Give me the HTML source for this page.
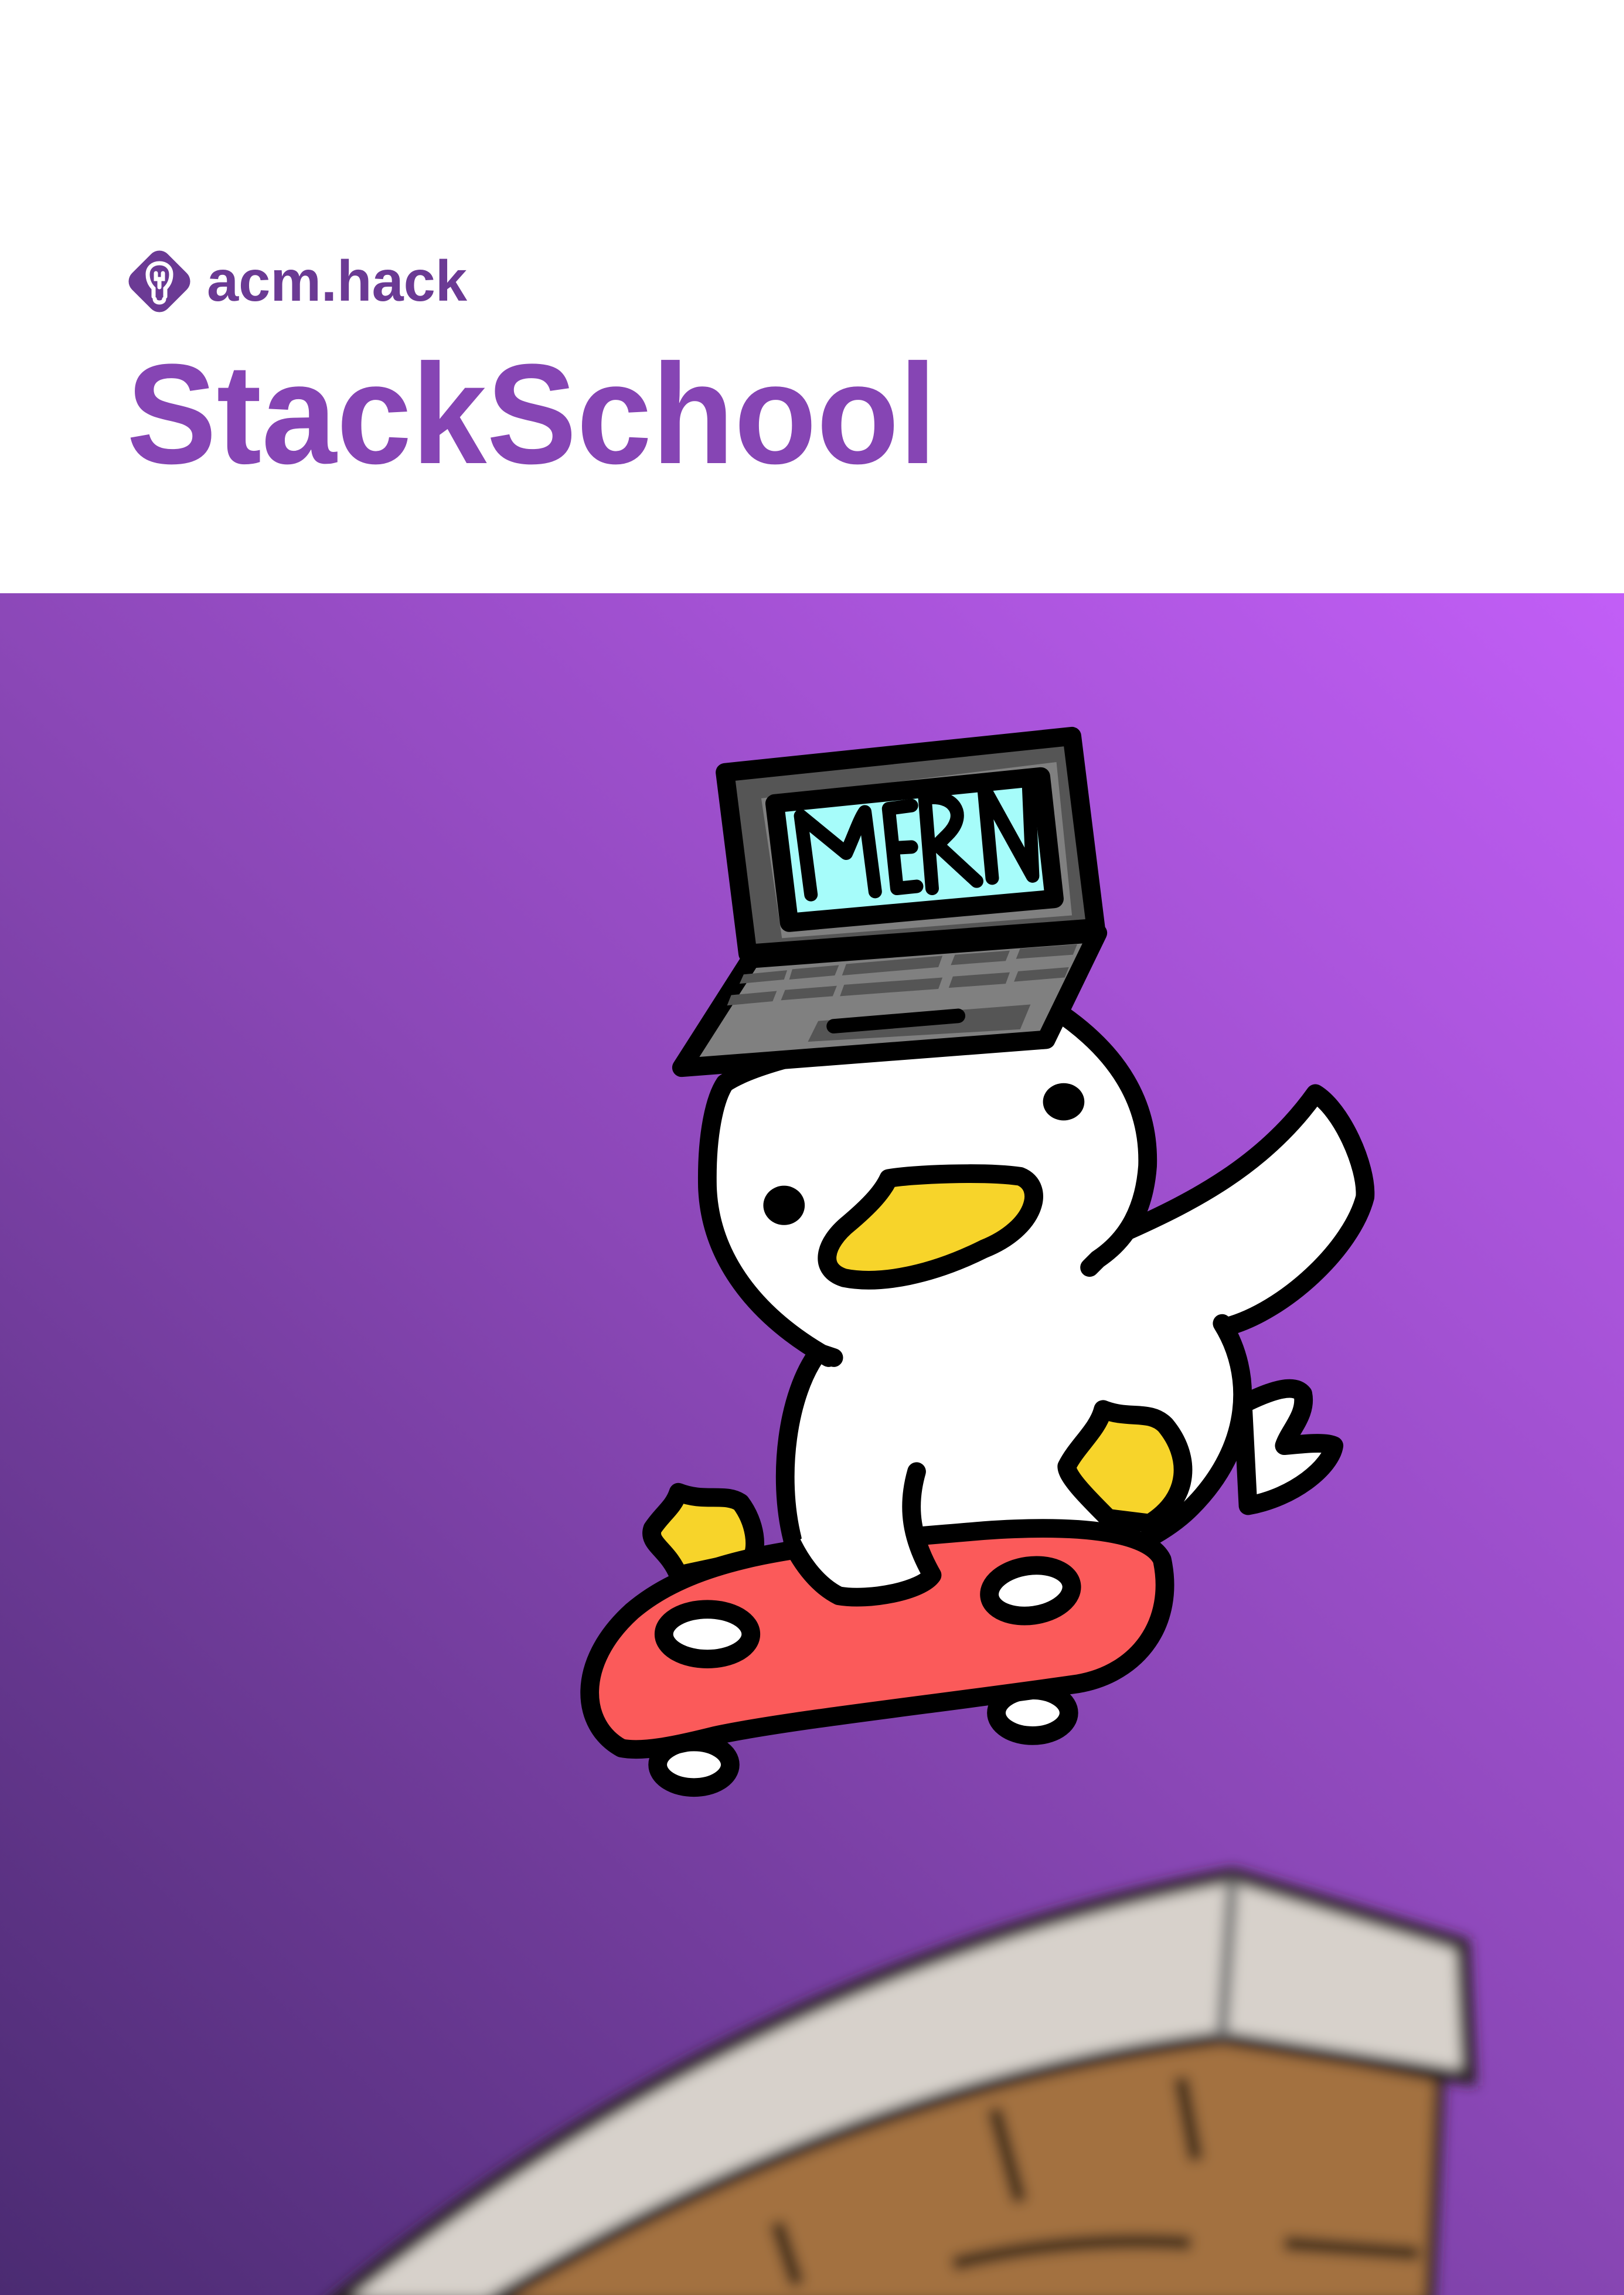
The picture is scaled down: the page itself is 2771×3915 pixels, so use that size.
<!DOCTYPE html>
<html><head><meta charset="utf-8"><style>
html,body{margin:0;padding:0;background:#fff;}
body{width:2771px;height:3915px;position:relative;overflow:hidden;}
svg{position:absolute;left:0;}
</style></head><body>
<svg style="top:0" width="2771" height="1012" viewBox="0 0 2771 1012">
  <rect x="229" y="437" width="86" height="86" rx="20" fill="#6b3a94" transform="rotate(45 272 480)"/>
  <g fill="none" stroke="#fff" stroke-width="7" stroke-linecap="round">
    <path d="M262,506 L262,492 C256,486 252,478 252,468 C252,456 261,449 272,449 C283,449 292,456 292,468 C292,478 288,486 282,492 L282,506"/>
    <path d="M264,510 C264,518 280,518 280,510"/>
    <path d="M266,466 L266,476 L278,476 L278,466 M272,476 L272,490"/>
  </g>
  <text x="353" y="513" textLength="444" lengthAdjust="spacingAndGlyphs" font-family="Liberation Sans, sans-serif" font-weight="700" font-size="98" fill="#6b3a94">acm.hack</text>
  <text x="216" y="790" textLength="1382" lengthAdjust="spacingAndGlyphs" font-family="Liberation Sans, sans-serif" font-weight="700" font-size="243" fill="#8645b4">StackSchool</text>
</svg>
<svg style="top:1012px" width="2771" height="2903" viewBox="0 7 1568 1643" preserveAspectRatio="none">
  <defs>
    <linearGradient id="bg" x1="1568" y1="0" x2="0" y2="1649" gradientUnits="userSpaceOnUse">
      <stop offset="0" stop-color="#c25ef7"/>
      <stop offset="0.5" stop-color="#8a47b6"/>
      <stop offset="1" stop-color="#4b2b72"/>
    </linearGradient>
    <filter id="bl" x="-10%" y="-10%" width="120%" height="120%"><feGaussianBlur stdDeviation="6"/></filter>
  </defs>
  <rect x="0" y="0" width="1568" height="1660" fill="url(#bg)"/>
  <g filter="url(#bl)">
    <path d="M460,1660 C700,1520 950,1430 1180,1400 L1390,1440 L1380,1660Z" fill="#a3713f" stroke="#2a2420" stroke-width="10"/>
    <path d="M320,1660 C600,1430 900,1300 1190,1245 L1412,1312 L1418,1440 L1180,1402 C950,1430 700,1520 470,1660Z" fill="#d7d1cb" stroke="#2a2420" stroke-width="14"/>
    <path d="M1190,1250 L1180,1400" stroke="#777" stroke-width="12"/>
    <path d="M750,1580 L770,1640 M960,1470 L985,1560 M1140,1440 L1155,1520 M920,1620 C1000,1600 1080,1595 1150,1600 M1240,1600 L1370,1610" stroke="#3b2a1a" stroke-width="14" fill="none"/>
  </g>
  <g stroke="#000" stroke-width="18" stroke-linejoin="round" stroke-linecap="round">
    <path d="M1200,790 C1230,775 1250,770 1258,780 C1262,800 1245,815 1240,830 C1260,828 1280,826 1288,830 C1285,850 1250,880 1205,888Z" fill="#fff"/>
  </g>
  <g fill="#fff">
    <path d="M1080,625 C1150,595 1220,560 1270,490 C1295,505 1320,560 1318,590 C1305,640 1240,700 1185,715 L1100,700Z"/>
    <path d="M790,740 C760,780 750,860 765,920 C780,980 840,985 900,975 C1000,960 1100,940 1150,890 C1210,830 1210,760 1180,712 L1060,645 Z"/>
    <path d="M700,480 C760,440 990,420 1020,410 C1080,450 1110,500 1108,560 C1105,600 1090,630 1060,650 C1000,740 900,770 800,745 C720,700 685,640 683,580 C682,530 690,495 700,480Z"/>
    <path d="M1045,645 L1092,618 L1190,718 L1060,710Z"/>
  </g>
  <g stroke="#000" stroke-width="18" stroke-linejoin="round" stroke-linecap="round" fill="none">
    <path d="M1090,622 C1150,595 1220,560 1270,490 C1295,505 1320,560 1318,590 C1305,640 1240,700 1185,715"/>
    <path d="M1180,712 C1210,760 1210,830 1150,890 C1100,940 1000,960 900,975"/>
    <path d="M805,745 L790,740 C760,780 750,860 765,920"/>
    <path d="M800,745 C720,700 685,640 683,580 C682,530 690,495 700,480 C760,440 990,420 1020,410 C1080,450 1110,500 1108,560 C1105,600 1090,630 1060,650 L1052,658"/>
  </g>
  <g stroke="#000" stroke-width="18" stroke-linejoin="round" stroke-linecap="round">
    <path d="M1065,795 C1090,805 1110,795 1125,810 C1150,840 1150,880 1110,905 L1070,900 C1050,880 1030,860 1030,850 C1040,830 1060,815 1065,795Z" fill="#f7d42a"/>
    <path d="M655,875 C680,885 700,875 715,885 C730,905 732,930 725,940 L655,955 C645,930 625,925 630,910 C640,895 650,890 655,875Z" fill="#f7d42a"/>
    <ellipse cx="670" cy="1138" rx="35" ry="22" fill="#fff"/>
    <ellipse cx="997" cy="1088" rx="35" ry="22" fill="#fff"/>
    <path d="M600,1122 C560,1100 555,1040 610,990 C680,930 800,925 950,912 C1050,905 1110,915 1122,940 C1135,1000 1100,1050 1040,1060 C900,1080 760,1095 690,1110 C650,1120 620,1126 600,1122Z" fill="#fb5a5a"/>
    <path d="M885,855 C875,890 880,920 900,955 C890,970 840,980 810,975 C790,965 775,945 765,925" fill="#fff"/>
    <ellipse cx="683" cy="1012" rx="42" ry="24" fill="#fff"/>
    <ellipse cx="995" cy="970" rx="40" ry="24" fill="#fff" transform="rotate(-8 995 970)"/>
    <path d="M858,572 C880,568 950,565 985,570 C1010,580 1000,620 950,640 C900,665 850,675 815,668 C790,660 795,635 820,615 C840,598 852,585 858,572Z" fill="#f7d42a"/>
    <path d="M725,360 L1060,335 L1010,438 L658,465Z" fill="#808080"/>
    <path d="M700,180 L1035,145 L1058,330 L722,355Z" fill="#555"/>
    <path d="M735,205 L1020,170 L1035,318 L755,340Z" fill="#808080" stroke-width="0"/>
    <path d="M748,210 L1005,184 L1018,302 L762,325Z" fill="#a6fcfa"/>
  </g>
  <g fill="#555">
    <path d="M718,375 L760,371 L757,380 L714,384Z M765,370 L810,366 L806,376 L762,380Z M817,365 L910,357 L906,368 L813,376Z M922,356 L975,352 L971,362 L918,366Z M985,350 L1040,346 L1036,356 L981,360Z"/>
    <path d="M706,395 L750,391 L746,401 L702,405Z M758,390 L808,386 L804,396 L754,400Z M815,385 L910,378 L906,389 L811,396Z M920,377 L975,373 L971,384 L916,388Z M983,372 L1032,368 L1028,378 L979,382Z"/>
    <path d="M790,420 L995,404 L985,428 L780,440Z"/>
  </g>
  <path d="M805,425 L925,415" stroke="#000" stroke-width="14" stroke-linecap="round"/>
  <g fill="none" stroke="#000" stroke-width="13" stroke-linecap="round" stroke-linejoin="round">
    <path d="M783,298 L773,222 L817,258 C825,240 830,225 835,218 L845,295"/>
    <path d="M858,215 L866,292 L885,290 M862,253 L880,252 M858,215 L880,212"/>
    <path d="M900,292 L893,205 C920,200 935,220 915,240 L905,250 L943,285"/>
    <path d="M958,282 L950,195 L997,280 L993,188"/>
  </g>
  <ellipse cx="757" cy="598" rx="20" ry="19" fill="#000"/>
  <ellipse cx="1027" cy="498" rx="20" ry="18" fill="#000"/>
</svg>
</body></html>
